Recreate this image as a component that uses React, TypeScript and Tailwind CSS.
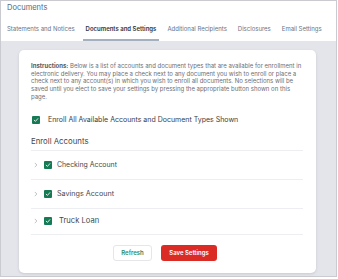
import React from 'react';

const tabs = [
  { label: 'Statements and Notices', active: false },
  { label: 'Documents and Settings', active: true },
  { label: 'Additional Recipients', active: false },
  { label: 'Disclosures', active: false },
  { label: 'Email Settings', active: false },
];

const accounts = [
  { name: 'Checking Account', size: 'text-[6.9px]', gap: 'ml-[5px]', h: 'h-[29px]' },
  { name: 'Savings Account', size: 'text-[7.2px]', gap: 'ml-[5px]', h: 'h-[29px]' },
  { name: 'Truck Loan', size: 'text-[7.6px]', gap: 'ml-[7px]', h: 'h-[26px]' },
];

function Check() {
  return (
    <span className="flex h-[8px] w-[8px] shrink-0 items-center justify-center rounded-[1px] bg-[#167a55]">
      <svg width="6" height="6" viewBox="0 0 10 10" fill="none">
        <path d="M2 5.3 4.1 7.3 8 2.8" stroke="white" strokeWidth="1.4" strokeLinecap="round" strokeLinejoin="round" />
      </svg>
    </span>
  );
}

export default function App() {
  return (
    <div className="h-[279px] w-[338px] bg-white font-['Inter',sans-serif]">
      <div className="flex h-[277px] w-[337px] flex-col border border-[#c9cbd0] bg-[#e3e5eb]">
        {/* Header */}
        <div className="flex h-[40px] shrink-0 flex-col justify-between bg-white">
          <div className="pl-[6px] pt-[2px] text-[7.5px] leading-[10px] text-[#56687a]">Documents</div>
          <div className="flex gap-[5px] pl-[3px] text-[6px] leading-[10px] text-[#65758a]">
            {tabs.map((t) => (
              <div
                key={t.label}
                className={
                  t.active
                    ? 'whitespace-nowrap border-b-[2px] border-[#a5b0be] px-[3px] pb-[5px] font-semibold text-[#2b3644]'
                    : 'whitespace-nowrap border-b-[2px] border-transparent px-[3px] pb-[5px]'
                }
              >
                {t.label}
              </div>
            ))}
          </div>
        </div>

        {/* Card */}
        <div className="ml-[18px] mt-[9px] h-[223px] w-[297px] rounded-[5px] bg-white pl-[12px] pr-[13px] pt-[12px] shadow-[0_1px_3px_rgba(0,0,0,0.12)]">
          <p className="text-[6px] leading-[7.7px] text-[#6b6f76]">
            <span className="font-bold text-[#55595f]">Instructions:</span> Below is a list of accounts and document
            types that are available for enrollment in electronic delivery. You may place a check next to any document
            you wish to enroll or place a check next to any account(s) in which you wish to enroll all documents. No
            selections will be saved until you elect to save your settings by pressing the appropriate button shown on
            this page.
          </p>

          <div className="mt-[14px] flex items-center gap-[8px] pl-[1px]">
            <Check />
            <span className="text-[7px] leading-[10px] text-[#3a3d42]">
              Enroll All Available Accounts and Document Types Shown
            </span>
          </div>

          <div className="mt-[11px] border-b border-[#eceef1] pb-[3px] text-[7.8px] leading-[11px] text-[#45484d]">
            Enroll Accounts
          </div>

          {accounts.map((a) => (
            <div key={a.name} className={`flex ${a.h} items-center border-b border-[#eceef1] pl-[2px]`}>
              <svg width="6" height="6" viewBox="0 0 10 10" fill="none" className="mr-[5px]">
                <path d="M3.5 2 6.5 5 3.5 8" stroke="#a6a9ae" strokeWidth="1.2" strokeLinecap="round" strokeLinejoin="round" />
              </svg>
              <Check />
              <span className={`${a.gap} ${a.size} leading-[10px] text-[#45484d]`}>{a.name}</span>
            </div>
          ))}

          <div className="mt-[10px] flex justify-center gap-[9px] pr-[4px]">
            <button className="h-[16px] w-[39px] rounded-[3px] border border-[#e4e6ea] bg-white text-[6px] font-semibold text-[#2f8a63]">
              Refresh
            </button>
            <button className="h-[16px] w-[56px] rounded-[3px] bg-[#db2b25] text-[6px] font-semibold text-white">
              Save Settings
            </button>
          </div>
        </div>
      </div>
    </div>
  );
}
